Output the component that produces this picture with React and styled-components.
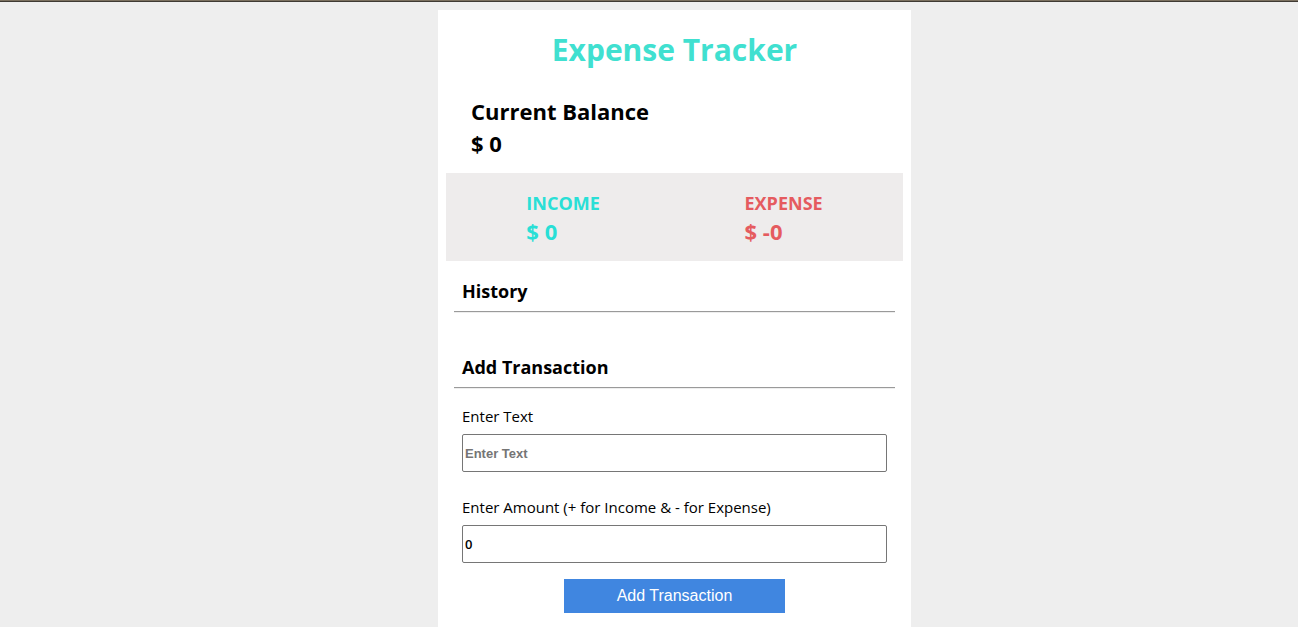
import React, { useState } from "react";
import styled, { createGlobalStyle } from "styled-components";

const GlobalStyle = createGlobalStyle`
  * { box-sizing: border-box; }
  body {
    margin: 0;
    background: #eeeeee;
    color: #000000;
    font-family: "Segoe UI", "Open Sans", "Noto Sans", sans-serif;
  }
  h1, h2, h3, p { margin: 0; }
`;

const TopBar = styled.div`
  height: 2px;
  background: #7b705f;
  border-bottom: 1px solid #3f3a33;
`;

const Page = styled.div`
  display: flex;
  justify-content: center;
  padding: 8px 0 0 51px;
`;

const Card = styled.main`
  width: 100%;
  max-width: 473px;
  min-height: calc(100vh - 10px);
  padding: 0 8px;
  background: #ffffff;
`;

const Title = styled.h1`
  padding-top: 18px;
  color: #40e0d0;
  font-size: 30px;
  font-weight: 700;
  line-height: 44px;
  text-align: center;
`;

const Balance = styled.section`
  padding: 23px 25px 14px;
  font-size: 22px;
  font-weight: 700;
  line-height: 32px;
`;

const BalanceText = styled.h2`
  font-size: inherit;
  line-height: inherit;
`;

const Summary = styled.section`
  display: flex;
  justify-content: space-around;
  padding: 16px 8px;
  background: #eeecec;
`;

const SummaryItem = styled.div`
  color: ${(p) => p.$color};
  font-weight: 700;
  line-height: 28px;
`;

const SummaryLabel = styled.h3`
  font-size: 18px;
`;

const SummaryAmount = styled.p`
  font-size: 22px;
`;

const Section = styled.section`
  padding: 16px 8px 0;
`;

const SectionTitle = styled.h3`
  padding: 0 8px 6px;
  font-size: 18px;
  font-weight: 700;
  line-height: 28px;
`;

const Rule = styled.hr`
  height: 2px;
  margin: 0;
  border: 0;
  border-top: 1px solid #9a9a9a;
  border-bottom: 1px solid #eeeeee;
`;

const History = styled(Section)`
  padding-bottom: 24px;
`;

const Form = styled.form`
  display: flex;
  flex-direction: column;
  padding: 15px 8px;
`;

const Field = styled.div`
  display: flex;
  flex-direction: column;
  gap: 6px;
  & + & { margin-top: 23px; }
`;

const Label = styled.label`
  font-size: 15px;
  line-height: 24px;
`;

const Input = styled.input`
  width: 100%;
  height: 38px;
  padding: 1px 2px;
  border: 1px solid #767676;
  border-radius: 2px;
  background: #ffffff;
  color: #000000;
  font-family: "Segoe UI", "Open Sans", sans-serif;
  font-size: 13px;
  font-weight: 600;
  &::placeholder {
    color: #757575;
    opacity: 1;
    font-family: "Liberation Sans", Arial, sans-serif;
    font-weight: 700;
  }
`;

const SubmitButton = styled.button`
  align-self: center;
  width: 52%;
  height: 34px;
  margin-top: 16px;
  padding: 0;
  border: 0;
  background: #4086e0;
  color: #ffffff;
  font-family: "Liberation Sans", Arial, sans-serif;
  font-size: 16px;
  cursor: pointer;
`;

export default function App() {
  const [text, setText] = useState("");
  const [amount, setAmount] = useState("0");
  const [entries, setEntries] = useState([]);

  const income = entries.filter((n) => n > 0).reduce((a, b) => a + b, 0);
  const expense = entries.filter((n) => n < 0).reduce((a, b) => a - b, 0);

  const handleSubmit = (e) => {
    e.preventDefault();
    setEntries([...entries, Number(amount) || 0]);
    setText("");
    setAmount("0");
  };

  return (
    <>
      <GlobalStyle />
      <TopBar />
      <Page>
        <Card>
          <Title>Expense Tracker</Title>
          <Balance>
            <BalanceText>Current Balance</BalanceText>
            <p>{`$ ${income - expense}`}</p>
          </Balance>
          <Summary>
            <SummaryItem $color="#29dfd6">
              <SummaryLabel>INCOME</SummaryLabel>
              <SummaryAmount>{`$ ${income}`}</SummaryAmount>
            </SummaryItem>
            <SummaryItem $color="#e55b5f">
              <SummaryLabel>EXPENSE</SummaryLabel>
              <SummaryAmount>{`$ -${expense}`}</SummaryAmount>
            </SummaryItem>
          </Summary>
          <History>
            <SectionTitle>History</SectionTitle>
            <Rule />
          </History>
          <Section>
            <SectionTitle>Add Transaction</SectionTitle>
            <Rule />
            <Form onSubmit={handleSubmit}>
              <Field>
                <Label htmlFor="text">Enter Text</Label>
                <Input
                  id="text"
                  type="text"
                  placeholder="Enter Text"
                  value={text}
                  onChange={(e) => setText(e.target.value)}
                />
              </Field>
              <Field>
                <Label htmlFor="amount">
                  Enter Amount (+ for Income &amp; - for Expense)
                </Label>
                <Input
                  id="amount"
                  type="number"
                  value={amount}
                  onChange={(e) => setAmount(e.target.value)}
                />
              </Field>
              <SubmitButton type="submit">Add Transaction</SubmitButton>
            </Form>
          </Section>
        </Card>
      </Page>
    </>
  );
}
